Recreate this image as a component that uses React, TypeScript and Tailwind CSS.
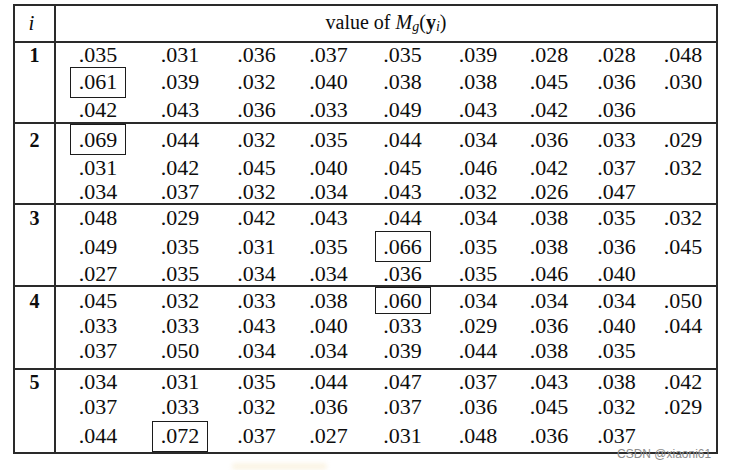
const serif = { fontFamily: '"Liberation Serif", "Times New Roman", serif' };

type Row = { h: string; vals: string[]; box?: number; boxH?: string };
type Group = { label: string; h: string; last?: boolean; rows: Row[] };

const groups: Group[] = [
  {
    label: "1",
    h: "h-[81px]",
    rows: [
      { h: "h-[24px]", vals: [".035", ".031", ".036", ".037", ".035", ".039", ".028", ".028", ".048"] },
      { h: "h-[32px]", box: 0, boxH: "h-[31px]", vals: [".061", ".039", ".032", ".040", ".038", ".038", ".045", ".036", ".030"] },
      { h: "h-[25px]", vals: [".042", ".043", ".036", ".033", ".049", ".043", ".042", ".036"] },
    ],
  },
  {
    label: "2",
    h: "h-[81px]",
    rows: [
      { h: "h-[32px]", box: 0, boxH: "h-[31px]", vals: [".069", ".044", ".032", ".035", ".044", ".034", ".036", ".033", ".029"] },
      { h: "h-[26px]", vals: [".031", ".042", ".045", ".040", ".045", ".046", ".042", ".037", ".032"] },
      { h: "h-[23px]", vals: [".034", ".037", ".032", ".034", ".043", ".032", ".026", ".047"] },
    ],
  },
  {
    label: "3",
    h: "h-[82px]",
    rows: [
      { h: "h-[26px]", vals: [".048", ".029", ".042", ".043", ".044", ".034", ".038", ".035", ".032"] },
      { h: "h-[34px]", box: 4, boxH: "h-[31px]", vals: [".049", ".035", ".031", ".035", ".066", ".035", ".038", ".036", ".045"] },
      { h: "h-[22px]", vals: [".027", ".035", ".034", ".034", ".036", ".035", ".046", ".040"] },
    ],
  },
  {
    label: "4",
    h: "h-[83px]",
    rows: [
      { h: "h-[27px]", box: 4, boxH: "h-[27px]", vals: [".045", ".032", ".033", ".038", ".060", ".034", ".034", ".034", ".050"] },
      { h: "h-[24px]", vals: [".033", ".033", ".043", ".040", ".033", ".029", ".036", ".040", ".044"] },
      { h: "h-[26px]", vals: [".037", ".050", ".034", ".034", ".039", ".044", ".038", ".035"] },
    ],
  },
  {
    label: "5",
    h: "h-[82px]",
    last: true,
    rows: [
      { h: "h-[24px]", vals: [".034", ".031", ".035", ".044", ".047", ".037", ".043", ".038", ".042"] },
      { h: "h-[26px]", vals: [".037", ".033", ".032", ".036", ".037", ".036", ".045", ".032", ".029"] },
      { h: "h-[32px]", box: 1, boxH: "h-[31px]", vals: [".044", ".072", ".037", ".027", ".031", ".048", ".036", ".037"] },
    ],
  },
];

function ValueRow({ row }: { row: Row }) {
  return (
    <div className={`grid grid-cols-[84px_80px_73px_71px_77px_74px_68px_67px_66px] items-center ${row.h}`}>
      {row.vals.map((v, i) => (
        <div key={i} className="flex h-full items-center justify-center">
          {row.box === i ? (
            <span className={`flex w-[56px] items-center justify-center border border-[#1c1c1c] ${row.boxH}`}>{v}</span>
          ) : (
            <span>{v}</span>
          )}
        </div>
      ))}
    </div>
  );
}

function GroupBlock({ group }: { group: Group }) {
  return (
    <div className={`flex ${group.h} ${group.last ? "" : "border-b-2 border-[#2a2a2a]"}`}>
      <div className="w-[41px] shrink-0 border-r-2 border-[#2a2a2a]">
        <div className={`flex items-center justify-center text-[20px] font-bold ${group.rows[0].h}`}>{group.label}</div>
      </div>
      <div className="flex flex-1 flex-col">
        {group.rows.map((row, i) => (
          <ValueRow key={i} row={row} />
        ))}
      </div>
    </div>
  );
}

export default function App() {
  return (
    <div className="relative h-[470px] w-[736px] overflow-hidden bg-white text-[22px] leading-none text-[#0d0d0d]" style={serif}>
      <div className="ml-[13px] mt-[4px] w-[705px] border-2 border-[#2a2a2a]">
        <div className="flex h-[37px] border-b-2 border-[#2a2a2a]">
          <div className="flex w-[41px] shrink-0 items-center justify-center border-r-2 border-[#2a2a2a] pr-[6px] text-[21px] italic">
            i
          </div>
          <div className="flex flex-1 items-center justify-center pb-[4px] text-[20px]">
            <span>value of&nbsp;</span>
            <span className="italic">M</span>
            <span className="relative top-[5px] text-[14px] italic">g</span>
            <span>(</span>
            <span className="font-bold">y</span>
            <span className="relative top-[5px] text-[14px] italic">i</span>
            <span>)</span>
          </div>
        </div>
        {groups.map((g) => (
          <GroupBlock key={g.label} group={g} />
        ))}
      </div>
      <div className="absolute left-[232px] top-[463px] h-[7px] w-[95px] rounded-full bg-[#fbf5e6] blur-[2px]" />
      <div
        className="absolute left-[617px] top-[448px] text-[12px] leading-none text-[#8c8c8c]"
        style={{ fontFamily: '"Liberation Sans", Arial, sans-serif' }}
      >
        CSDN @xiaoni61
      </div>
    </div>
  );
}
